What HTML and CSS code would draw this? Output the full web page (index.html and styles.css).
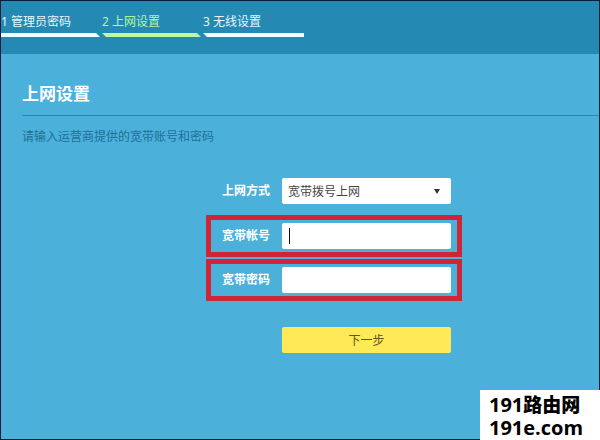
FILE: index.html
```html
<!DOCTYPE html>
<html lang="zh-CN">
<head>
    <meta charset="UTF-8">
    <meta name="viewport" content="width=device-width, initial-scale=1.0">
    <title>上网设置</title>
    <link rel="stylesheet" href="styles.css">
</head>
<body>

<!-- Setup steps -->
<header class="header">
    <ol class="steps">
        <li class="step">1 管理员密码</li>
        <li class="step active">2 上网设置</li>
        <li class="step">3 无线设置</li>
    </ol>
</header>

<main class="content">
    <h1>上网设置</h1>
    <p class="hint">请输入运营商提供的宽带账号和密码</p>

    <form class="wan-form">
        <div class="row">
            <label for="wan-type">上网方式</label>
            <div class="select-box">
                <select id="wan-type">
                    <option>宽带拨号上网</option>
                </select>
            </div>
        </div>
        <div class="row marked">
            <label for="account">宽带帐号</label>
            <input class="current" type="text" id="account">
        </div>
        <div class="row marked">
            <label for="password">宽带密码</label>
            <input type="password" id="password">
        </div>
        <div class="row">
            <button class="button" type="button">下一步</button>
        </div>
    </form>
</main>

<!-- Site mark in the corner -->
<div class="site-mark">
    <div>191<span class="site-name">路由网</span></div>
    <div>191e.com</div>
</div>

</body>
</html>
```
FILE: styles.css
```css
* {
    box-sizing: border-box;
}
body {
    margin: 0;
    min-height: 100vh;
    border: 1px solid #06203a;
    background-color: #4bb0da;
    color: white;
    font-family: "Noto Sans", "Noto Sans CJK SC", sans-serif;
    font-size: 12px;
    line-height: 18px;
}
.header {
    background-color: #248ab4;
    padding: 12px 0 17px;
}
.steps {
    display: flex;
    margin: 0;
    padding: 0;
    list-style: none;
}
.step {
    width: 101px;
    color: #e6f6fb;
}
.step::after {
    content: "";
    display: block;
    height: 4px;
    margin-top: 2px;
    background-color: #f2fcff;
    clip-path: polygon(0 0, 95px 0, 99px 100%, 4px 100%);
}
.step:first-child::after {
    clip-path: polygon(0 0, 95px 0, 99px 100%, 0 100%);
}
.step:last-child::after {
    clip-path: polygon(0 0, 100% 0, 100% 100%, 4px 100%);
}
.step.active {
    color: #b4f79c;
}
.step.active::after {
    background-color: #c4f6a2;
}
.content {
    padding: 28px 0 0 21px;
}
h1 {
    margin: 0;
    padding-bottom: 9px;
    border-bottom: 1px solid #248ab4;
    font-size: 17px;
    line-height: 24px;
}
.hint {
    margin: 12px 0 0;
    color: #1f7197;
}
.wan-form {
    width: 256px;
    margin: 32px 0 0 184px;
}
.row {
    display: flex;
    align-items: center;
    justify-content: flex-end;
    gap: 12px;
    padding: 0 11px;
}
.row label {
    font-weight: bold;
}
.marked {
    margin-top: 11px;
    padding: 3px 6px;
    border: 5px solid #cf2536;
}
.marked + .marked {
    margin-top: 2px;
}
.marked + .row:last-child {
    margin-top: 26px;
}
.row input,
.row select,
.button {
    display: block;
    width: 169px;
    height: 26px;
    border: none;
    border-radius: 2px;
    font-family: inherit;
    font-size: 12px;
}
.row input {
    padding: 0 6px;
    background-color: white;
}
/* text cursor of the field being filled in */
.row .current {
    background: linear-gradient(#111, #111) 7px center / 1px 16px no-repeat white;
}
.select-box {
    position: relative;
}
.select-box::after {
    content: "";
    position: absolute;
    top: 11px;
    right: 11px;
    border: 3px solid transparent;
    border-top: 5px solid #333;
    border-bottom: none;
    pointer-events: none;
}
.row select {
    appearance: none;
    padding: 0 6px;
    background-color: white;
    color: #444;
}
.button {
    padding: 0;
    background-color: #fee957;
    color: #5e5524;
    cursor: pointer;
}
.site-mark {
    position: absolute;
    right: 0;
    bottom: 0;
    width: 120px;
    height: 50px;
    padding: 2px 0 0 9px;
    background-color: white;
    color: black;
    font-family: "Open Sans", "Noto Sans CJK SC", sans-serif;
    font-size: 20px;
    font-weight: bold;
    line-height: 23px;
    white-space: nowrap;
}
.site-name {
    font-family: "Noto Sans CJK SC", sans-serif;
    font-size: 19px;
    font-weight: 900;
}
```
